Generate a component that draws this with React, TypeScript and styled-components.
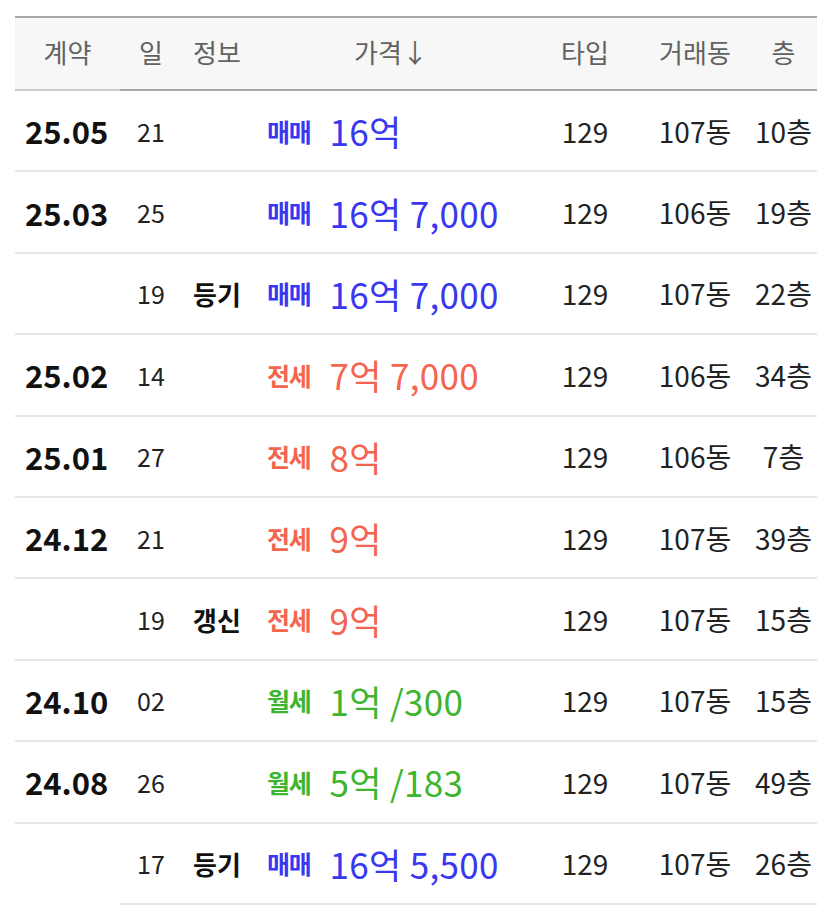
import React from 'react';
import styled, { createGlobalStyle } from 'styled-components';

const Global = createGlobalStyle`
  html, body { margin: 0; padding: 0; background: #ffffff; }
  body { font-family: "Noto Sans CJK KR", "Noto Sans", sans-serif; }
`;

const COLS = '105px 62px 70px 278px 110px 110px 67px';

const Wrap = styled.div`
  padding: 16px 10px 0 15px;
`;

const Grid = styled.div`
  width: 802px;
  display: flex;
  flex-direction: column;
`;

const HeadRow = styled.div`
  display: grid;
  grid-template-columns: ${COLS};
  height: 75px;
  box-sizing: border-box;
  border-top: 2px solid #a9a9a9;
  background: #f7f7f7;
`;

const Th = styled.div<{ $first?: boolean }>`
  display: flex;
  align-items: center;
  justify-content: center;
  font-size: 26px;
  color: #626262;
  border-bottom: 2px solid ${(p) => (p.$first ? '#cdcdcd' : '#a9a9a9')};
  padding-bottom: 4px;
  white-space: nowrap;
`;

const Row = styled.div`
  display: grid;
  grid-template-columns: ${COLS};
  height: 81.4px;
`;

const Cell = styled.div<{ $align?: 'left' | 'center'; $pad?: number; $noLine?: boolean }>`
  display: flex;
  align-items: center;
  justify-content: ${(p) => (p.$align === 'left' ? 'flex-start' : 'center')};
  padding-left: ${(p) => p.$pad ?? 0}px;
  border-bottom: 2px solid ${(p) => (p.$noLine ? 'transparent' : '#e6e6e6')};
  color: #1a1a1a;
  white-space: nowrap;
`;

const DateText = styled.span`
  font-size: 31px;
  font-weight: 700;
  color: #111;
  letter-spacing: 0px;
`;

const Info = styled.span`
  font-size: 26px;
  font-weight: 700;
  color: #111;
`;

const KIND_COLORS: Record<string, string> = {
  매매: '#3838f0',
  전세: '#f4654f',
  월세: '#3db52e',
};

const Kind = styled.span<{ $c: string }>`
  font-size: 25px;
  font-weight: 700;
  color: ${(p) => p.$c};
  margin-right: 19px;
  letter-spacing: -1.2px;
`;

const Price = styled.span<{ $c: string }>`
  font-size: 35px;
  color: ${(p) => p.$c};
  letter-spacing: 0.3px;
`;

const Day = styled.span`
  font-size: 25px;
  color: #222;
`;

const Plain = styled.span`
  font-size: 28px;
  color: #222;
`;

type R = {
  date: string;
  day: string;
  info?: string;
  kind: string;
  price: string;
  type: string;
  dong: string;
  floor: string;
};

const rows: R[] = [
  { date: '25.05', day: '21', kind: '매매', price: '16억', type: '129', dong: '107동', floor: '10층' },
  { date: '25.03', day: '25', kind: '매매', price: '16억 7,000', type: '129', dong: '106동', floor: '19층' },
  { date: '', day: '19', info: '등기', kind: '매매', price: '16억 7,000', type: '129', dong: '107동', floor: '22층' },
  { date: '25.02', day: '14', kind: '전세', price: '7억 7,000', type: '129', dong: '106동', floor: '34층' },
  { date: '25.01', day: '27', kind: '전세', price: '8억', type: '129', dong: '106동', floor: '7층' },
  { date: '24.12', day: '21', kind: '전세', price: '9억', type: '129', dong: '107동', floor: '39층' },
  { date: '', day: '19', info: '갱신', kind: '전세', price: '9억', type: '129', dong: '107동', floor: '15층' },
  { date: '24.10', day: '02', kind: '월세', price: '1억 /300', type: '129', dong: '107동', floor: '15층' },
  { date: '24.08', day: '26', kind: '월세', price: '5억 /183', type: '129', dong: '107동', floor: '49층' },
  { date: '', day: '17', info: '등기', kind: '매매', price: '16억 5,500', type: '129', dong: '107동', floor: '26층' },
];

export default function App() {
  return (
    <Wrap>
      <Global />
      <Grid>
        <HeadRow>
          <Th $first>계약</Th>
          <Th>일</Th>
          <Th>정보</Th>
          <Th>가격↓</Th>
          <Th>타입</Th>
          <Th>거래동</Th>
          <Th>층</Th>
        </HeadRow>
        {rows.map((r, i) => {
          const c = KIND_COLORS[r.kind];
          const last = i === rows.length - 1;
          return (
            <Row key={i}>
              <Cell $align="left" $pad={10} $noLine={last}>
                <DateText>{r.date}</DateText>
              </Cell>
              <Cell $align="left" $pad={17}>
                <Day>{r.day}</Day>
              </Cell>
              <Cell>
                <Info>{r.info}</Info>
              </Cell>
              <Cell $align="left" $pad={15}>
                <Kind $c={c}>{r.kind}</Kind>
                <Price $c={c}>{r.price}</Price>
              </Cell>
              <Cell>
                <Plain>{r.type}</Plain>
              </Cell>
              <Cell>
                <Plain>{r.dong}</Plain>
              </Cell>
              <Cell>
                <Plain>{r.floor}</Plain>
              </Cell>
            </Row>
          );
        })}
      </Grid>
    </Wrap>
  );
}
